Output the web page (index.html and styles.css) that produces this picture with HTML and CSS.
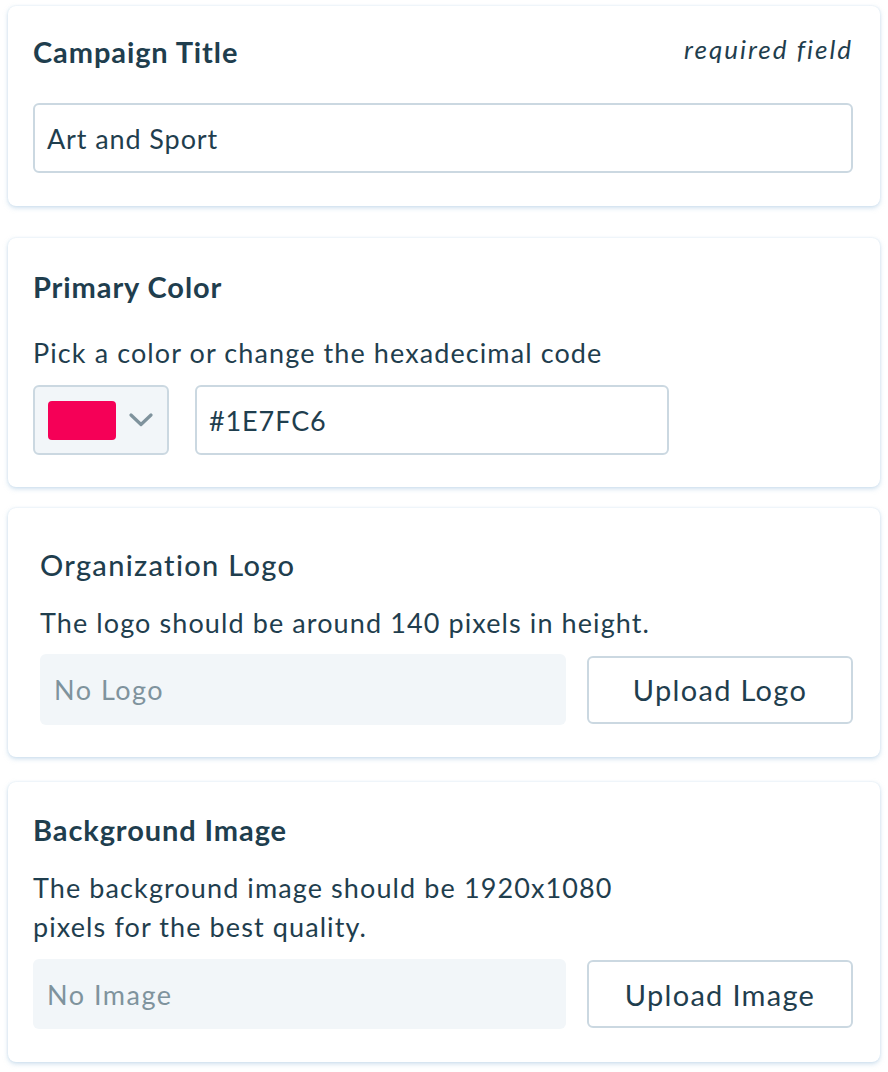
FILE: index.html
```html
<!DOCTYPE html>
<html>
<head>
<meta charset="utf-8">
<link rel="stylesheet" href="styles.css">
</head>
<body>
<main class="page">
  <section class="card card-title">
    <div class="card-head">
      <h2 class="title">Campaign Title</h2>
      <span class="required">required field</span>
    </div>
    <div class="input input-full">Art and Sport</div>
  </section>

  <section class="card card-color">
    <h2 class="title">Primary Color</h2>
    <p class="desc">Pick a color or change the hexadecimal code</p>
    <div class="color-row">
      <div class="color-picker">
        <span class="swatch"></span>
        <svg class="chevron" width="24" height="14" viewBox="0 0 24 14"><path d="M2 2 L12 11.5 L22 2" fill="none" stroke="#7f939d" stroke-width="3.2" stroke-linecap="round" stroke-linejoin="round"/></svg>
      </div>
      <div class="input input-hex">#1E7FC6</div>
    </div>
  </section>

  <section class="card card-logo">
    <h2 class="title title-medium">Organization Logo</h2>
    <p class="desc">The logo should be around 140 pixels in height.</p>
    <div class="upload-row">
      <div class="placeholder">No Logo</div>
      <button class="btn btn-logo">Upload Logo</button>
    </div>
  </section>

  <section class="card card-bg">
    <h2 class="title">Background Image</h2>
    <p class="desc desc-wrap">The background image should be 1920x1080 pixels for the best quality.</p>
    <div class="upload-row">
      <div class="placeholder placeholder-img">No Image</div>
      <button class="btn btn-img">Upload Image</button>
    </div>
  </section>
</main>
</body>
</html>
```

FILE: styles.css
```css
* { box-sizing: border-box; }
html, body { margin: 0; padding: 0; background: #ffffff; }
body {
  font-family: "Lato", "Open Sans", sans-serif;
  color: #1f3e4e;
  width: 888px;
}
.page {
  padding: 6px 8px 0 8px;
  display: flex;
  flex-direction: column;
}
.card {
  background: #fff;
  border-radius: 8px;
  box-shadow: 0 2px 5px rgba(170, 200, 225, 0.55), 0 0 2px rgba(190, 215, 235, 0.5);
}
.title {
  margin: 0;
  font-size: 29px;
  line-height: 36px;
  font-weight: 700;
  letter-spacing: 0.9px;
}
.title-medium { font-weight: 500; letter-spacing: 1.3px; }
.desc {
  margin: 0;
  font-size: 27px;
  line-height: 36px;
  font-weight: 400;
  letter-spacing: 1.1px;
}
.input {
  border: 2px solid #cbd8e1;
  border-radius: 6px;
  background: #fff;
  font-size: 27px;
  display: flex;
  align-items: center;
  padding-left: 12px;
  letter-spacing: 0.9px;
}

/* card 1 */
.card-title { padding: 28px 27px 33px 25px; margin-bottom: 32px; }
.card-head { display: flex; justify-content: space-between; align-items: flex-start; }
.required {
  font-style: italic;
  font-size: 26px;
  line-height: 28px;
  margin-top: 1px;
  letter-spacing: 2px;
  font-weight: 400;
}
.input-full { margin-top: 33px; height: 70px; }

/* card 2 */
.card-color { padding: 31px 27px 32px 25px; margin-bottom: 21px; }
.card-color .desc { margin-top: 30px; }
.color-row { display: flex; gap: 26px; margin-top: 14px; height: 70px; }
.color-picker {
  width: 136px;
  background: #f2f6f9;
  border: 2px solid #cbd8e1;
  border-radius: 6px;
  display: flex;
  align-items: center;
  padding-left: 13px;
  gap: 13px;
}
.swatch {
  width: 68px;
  height: 39px;
  border-radius: 4px;
  background: #f50057;
}
.input-hex { width: 474px; }

/* card 3 */
.card-logo { padding: 39px 27px 32px 32px; margin-bottom: 25px; }
.card-logo .desc { margin-top: 22px; }
.upload-row {
  display: flex;
  align-items: center;
  gap: 21px;
  margin-top: 13px;
}
.placeholder {
  flex: 1;
  height: 71px;
  background: #f2f6f9;
  border-radius: 6px;
  font-size: 27px;
  color: #7f939d;
  display: flex;
  align-items: center;
  padding-left: 14px;
  letter-spacing: 1.5px;
}
.btn {
  width: 266px;
  height: 68px;
  border: 2px solid #cbd8e1;
  border-radius: 6px;
  background: #fff;
  font-family: inherit;
  font-size: 29px;
  color: #1f3e4e;
  letter-spacing: 1.3px;
  padding: 0;
}

/* card 4 */
.card-bg { padding: 30px 27px 33px 25px; margin-bottom: 10px; }
.desc-wrap { margin-top: 20px; line-height: 39px; max-width: 600px; }
.placeholder-img { height: 70px; }
```
